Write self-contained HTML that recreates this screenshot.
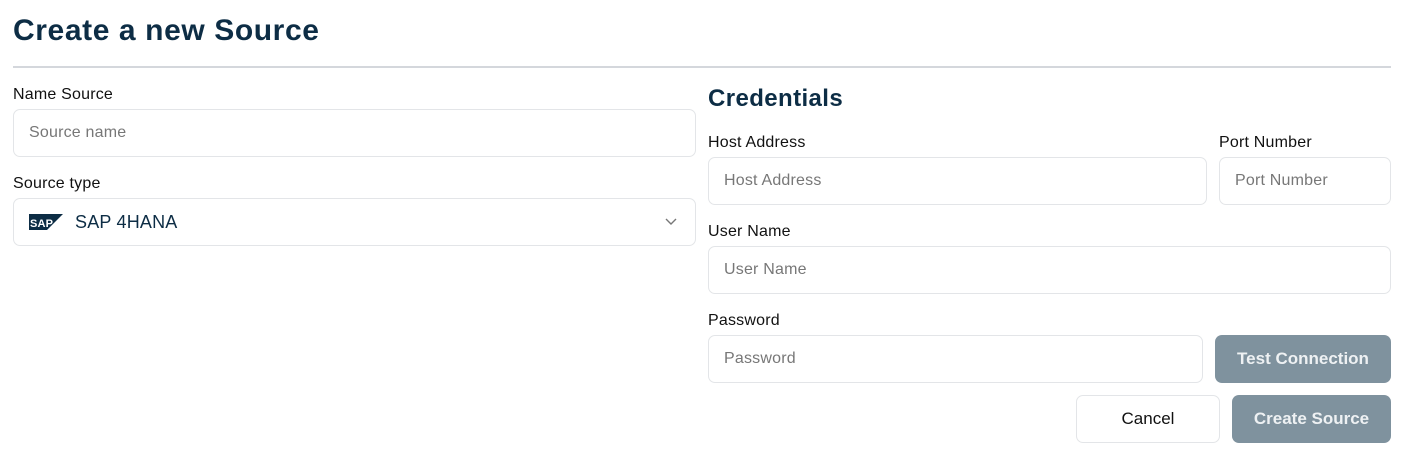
<!DOCTYPE html><html><head><style>
body{margin:0;width:1404px;height:473px;background:#fff;font-family:"Liberation Sans",sans-serif;position:relative;overflow:hidden}
.a{position:absolute}
h1{position:absolute;left:13px;top:14px;margin:0;font-size:30px;font-weight:700;color:#0d2d45;letter-spacing:0.6px}
.l{position:absolute;font-size:16px;color:#111;font-weight:500;letter-spacing:0.2px}
.i{position:absolute;border:1px solid #e3e5e8;border-radius:7px;box-sizing:border-box;font-size:16px;color:#777;padding-left:15px;display:flex;align-items:center;letter-spacing:0.2px}
.b{position:absolute;border-radius:7px;box-sizing:border-box;font-size:17px;font-weight:700;display:flex;align-items:center;justify-content:center}
.g{background:#7f929e;color:#eef1f3}
</style></head><body>
<h1>Create a new Source</h1>
<div class="a" style="left:13px;top:66px;width:1378px;height:2px;background:#d4d7dc"></div>
<div class="l" style="left:13px;top:86px">Name Source</div>
<div class="i" style="left:13px;top:109px;width:683px;height:48px">Source name</div>
<div class="l" style="left:13px;top:175px">Source type</div>
<div class="i" style="left:13px;top:198px;width:683px;height:48px;color:#0d2d45;font-size:18px">
<svg width="34" height="16" viewBox="0 0 34 16" style="margin-right:12px"><polygon points="0,0 34,0 18,16 0,16" fill="#0d2d45"/><text x="1" y="13" font-size="11" font-weight="700" fill="#fff" font-family="Liberation Sans">SAP</text></svg>SAP 4HANA
<svg class="a" style="right:18px;top:19px" width="12" height="8" viewBox="0 0 12 8"><path d="M1 1l5 5 5-5" stroke="#777" stroke-width="1.4" fill="none"/></svg></div>
<div class="a" style="left:708px;top:85px;font-size:24px;font-weight:700;color:#0d2d45;letter-spacing:0.4px">Credentials</div>
<div class="l" style="left:708px;top:134px">Host Address</div>
<div class="i" style="left:708px;top:157px;width:499px;height:48px">Host Address</div>
<div class="l" style="left:1219px;top:134px">Port Number</div>
<div class="i" style="left:1219px;top:157px;width:172px;height:48px">Port Number</div>
<div class="l" style="left:708px;top:223px">User Name</div>
<div class="i" style="left:708px;top:246px;width:683px;height:48px">User Name</div>
<div class="l" style="left:708px;top:312px">Password</div>
<div class="i" style="left:708px;top:335px;width:495px;height:48px">Password</div>
<div class="b g" style="left:1215px;top:335px;width:176px;height:48px">Test Connection</div>
<div class="b" style="left:1076px;top:395px;width:144px;height:48px;border:1px solid #e3e5e8;color:#111;font-weight:500">Cancel</div>
<div class="b g" style="left:1232px;top:395px;width:159px;height:48px">Create Source</div>
</body></html>
